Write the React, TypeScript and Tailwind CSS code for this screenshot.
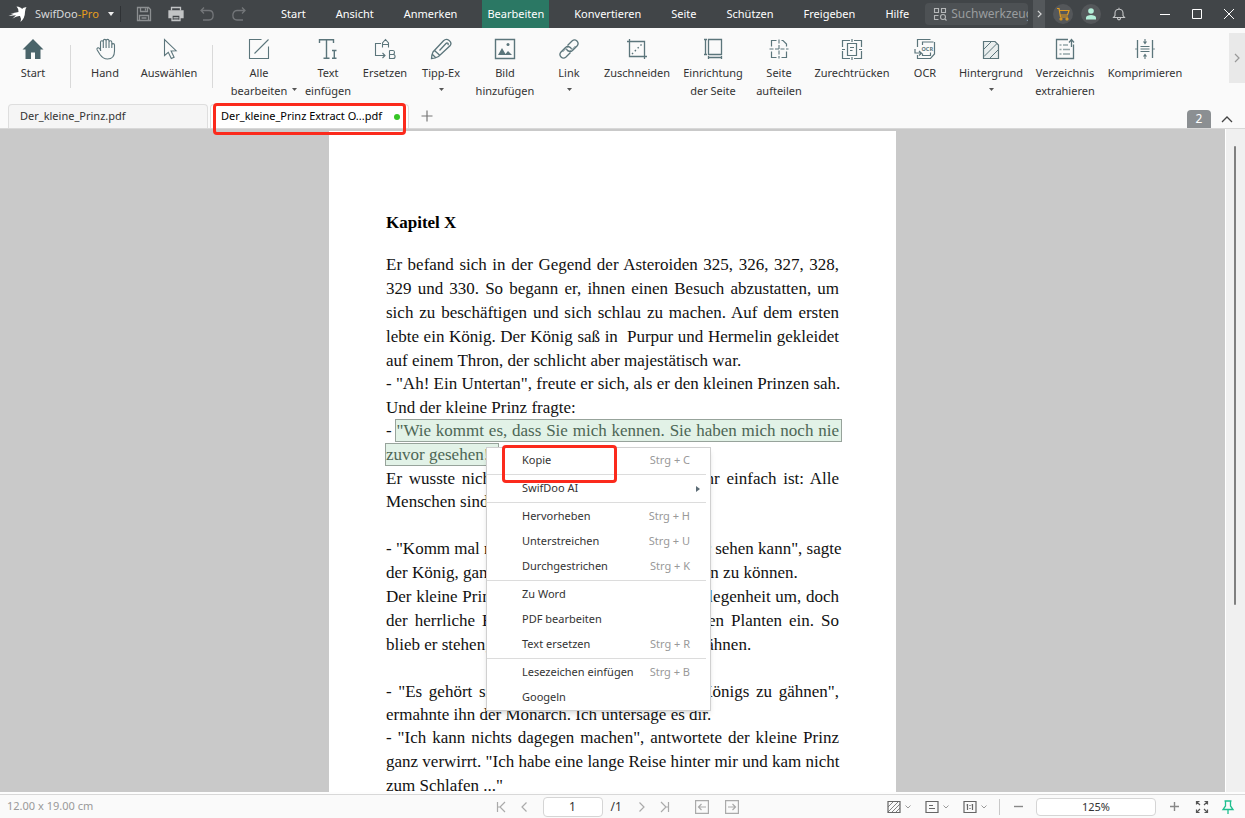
import type { ReactNode } from "react";

const menus = [
	"Start",
	"Ansicht",
	"Anmerken",
	"Bearbeiten",
	"Konvertieren",
	"Seite",
	"Schützen",
	"Freigeben",
	"Hilfe",
] as const;

type IconProps = { children: ReactNode };

function ToolIcon({ children }: IconProps) {
	return (
		<svg
			viewBox="0 0 22 22"
			className="h-[22px] w-[22px] shrink-0"
			fill="none"
			stroke="#5b757b"
			strokeWidth="1.1"
			aria-hidden="true"
		>
			{children}
		</svg>
	);
}

const icons = {
	home: (
		<ToolIcon>
			<path d="M11 1 0.5 11.5h3V21H9v-6.5h4V21h5.5v-9.5h3z" fill="#4a646a" stroke="none" />
		</ToolIcon>
	),
	hand: (
		<ToolIcon>
			<path d="M6.500 13V4.200c0-1.900 2.800-1.900 2.800 0V10M9.300 9V2.800c0-1.900 2.800-1.900 2.800 0V10M12.100 9V2.800c0-1.900 2.900-1.900 2.900 0V10M15 9V4.200c0-1.900 2.800-1.900 2.800 0V10M17.800 9V7c0-1.800 2.700-1.800 2.700 0v6c0 5-2.500 8-7 8-3.500 0-5.500-1.500-7.500-4.500L3.200 12c-1-1.700 1-3 2.300-1.500l1.500 2" />
		</ToolIcon>
	),
	select: (
		<ToolIcon>
			<path d="M6.500 1.500v16l3.800-3.200 3 6.200 2.800-1.300-3-6.200 5-.3z" />
		</ToolIcon>
	),
	editAll: (
		<ToolIcon>
			<path d="M13.500 1.500h-12v19h19v-12M6.500 15.500 20.500 1.500" />
		</ToolIcon>
	),
	addText: (
		<ToolIcon>
			<path d="M2.500 5V1.800h14V5M9.500 2v18M6.500 20.300h6M15 12.500h4.500M17.300 12.500v7.800M15 20.300h4.500" strokeWidth="1.400" />
		</ToolIcon>
	),
	replace: (
		<ToolIcon>
			<path d="M7 5.500H1.500v12H11M8.500 15l2.500 2.500L8.500 20M8.500 9.500V5l3-3.500 3 3.500v4.500M8.500 6.500h6M15.500 12.500v8h3.700c2.500 0 2.500-4 0-4h-3.700M19 16.500c2 0 2-4 0-4h-3.500" />
		</ToolIcon>
	),
	whiteout: (
		<ToolIcon>
			<path
				d="M1.500 20.500c0-2.500.5-4.500 1.500-6.500L13.500 2.800c3.500-3.500 9.500 1 6.500 5L8.500 18.500c-2 1.200-4.500 2-7 2zM4.500 12.500l5.500 5M2.500 16.500l3 3M9.500 12.500l6.500-7c1.300-1.300 3 .3 1.800 1.600"
				strokeWidth="1.300"
			/>
		</ToolIcon>
	),
	image: (
		<ToolIcon>
			<path d="M1.500 1.500h19v19h-19z" strokeWidth="1.400" />
			<path d="m4 17 4-7 3.500 6 2.500-3 4 4z" fill="#5b757b" stroke="none" />
			<circle cx="14" cy="6.500" r="1.500" fill="#5b757b" stroke="none" />
		</ToolIcon>
	),
	link: (
		<ToolIcon>
			<g strokeWidth="1.300">
				<path d="m9.500 7.500 4.500-4.500c3.500-3 8 1.500 5 5l-4.500 4.500c-2 1.800-5 1.200-6-1.500" />
				<path d="m12.500 14.500L8 19c-3.500 3-8-1.500-5-5l4.500-4.500c2-1.800 5-1.200 6 1.500" />
				<path d="M10.500 12.500c1 .8 1.800.6 2.500 0l4.500-4.500M11.500 9.500c-1-.8-1.800-.6-2.500 0L4.500 14" strokeWidth="0.900" />
			</g>
		</ToolIcon>
	),
	crop: (
		<ToolIcon>
			<path d="M1 3.500h17.500V21M3.500 1v17.500H21" strokeWidth="1.300" />
			<path d="m6 16 10-10" strokeDasharray="1.500 2.500" strokeWidth="1.400" />
		</ToolIcon>
	),
	pageSetup: (
		<ToolIcon>
			<path d="M6.500 1.500h13v15h-13zM3.500 1.500v15M2 1.500h3M2 16.500h3M6.500 19.500h13M6.500 18v3M19.500 18v3" strokeWidth="1.300" />
		</ToolIcon>
	),
	split: (
		<ToolIcon>
			<path d="M3.500 8.500v-6h5M13.500 2.500H15l3.500 3.500v2.500M3.500 13.500v6h5M13.500 19.500h5v-6" strokeWidth="1.200" />
			<path d="M1.500 11h19M11 1.500v19" strokeDasharray="4 1.500" strokeWidth="1.100" />
		</ToolIcon>
	),
	deskew: (
		<ToolIcon>
			<path
				d="M9 2.500H1.500V9M13 2.500h7.500V9M1.500 13v7.500H9M20.500 13v7.500H13M11 1v3M11 19v3M1 11.500h3M18 11.500h3M6.500 5.500h9v12h-9zM9 9.500h4M9 12.500h2.500"
				strokeWidth="1.200"
			/>
		</ToolIcon>
	),
	ocr: (
		<ToolIcon>
			<path
				d="M3.500 9V1.500h13M19.500 4H8.500v3M20.500 4v12l-4 4.500h-13V17M8.500 15.500v2h8v-3M1 11v4h6M5 13l2.500 2.200L5 17.500"
				strokeWidth="1.200"
			/>
			<text x="7.500" y="13" fontSize="5.500" fontWeight="700" fill="#5b757b" stroke="none" fontFamily="Noto Sans, sans-serif">
				OCR
			</text>
		</ToolIcon>
	),
	background: (
		<ToolIcon>
			<path d="M3.500 3.500H15l3.500 3.500v13.500h-15z" fill="#e9eeee" strokeWidth="1.200" />
			<path d="m4 11 7-7M4 18.500 16.500 6M10 20l8-8" strokeWidth="1" />
		</ToolIcon>
	),
	extract: (
		<ToolIcon>
			<path d="M14 1.500H2.500v19h17v-14M17.500 9V2M15 4.500l2.500-3L20 4.500" strokeWidth="1.300" />
			<path d="M5.500 7h2M9 7h5M5.500 11.500h2M9 11.500h7M5.500 16h2M9 16h7" stroke="#93a5a8" strokeWidth="1.500" />
		</ToolIcon>
	),
	compress: (
		<ToolIcon>
			<path d="M3.500 2v18M18.500 2v18M1.500 11h1M19.500 11h1" strokeWidth="1.300" />
			<path d="M6.500 8.500h9M6.500 11h9M6.500 13.500h9M11 1v4M11 17v4M9.500 3.500 11 5.500l1.500-2M9.500 18.500 11 16.500l1.500 2" />
		</ToolIcon>
	),
};

type Tool = {
	icon: keyof typeof icons;
	label: string;
	second?: string;
	caret?: boolean;
	width: string;
	divider?: string;
};

const tools: Tool[] = [
	{ icon: "home", label: "Start", width: "w-[66px]", divider: "w-2" },
	{ icon: "hand", label: "Hand", width: "w-[62px]" },
	{ icon: "select", label: "Auswählen", width: "w-[66px]", divider: "w-5" },
	{ icon: "editAll", label: "Alle", second: "bearbeiten", caret: true, width: "w-[74px]" },
	{ icon: "addText", label: "Text", second: "einfügen", width: "w-[64px]" },
	{ icon: "replace", label: "Ersetzen", width: "w-[50px]" },
	{ icon: "whiteout", label: "Tipp-Ex", caret: true, width: "w-[62px]" },
	{ icon: "image", label: "Bild", second: "hinzufügen", width: "w-[66px]" },
	{ icon: "link", label: "Link", caret: true, width: "w-[62px]" },
	{ icon: "crop", label: "Zuschneiden", width: "w-[74px]" },
	{ icon: "pageSetup", label: "Einrichtung", second: "der Seite", width: "w-[78px]" },
	{ icon: "split", label: "Seite", second: "aufteilen", width: "w-[54px]" },
	{ icon: "deskew", label: "Zurechtrücken", width: "w-[92px]" },
	{ icon: "ocr", label: "OCR", width: "w-[54px]" },
	{ icon: "background", label: "Hintergrund", caret: true, width: "w-[78px]" },
	{ icon: "extract", label: "Verzeichnis", second: "extrahieren", width: "w-[70px]" },
	{ icon: "compress", label: "Komprimieren", width: "w-[90px]" },
];

type MenuItem = { label: string; keys?: string; sub?: boolean };

const contextGroups: MenuItem[][] = [
	[{ label: "Kopie", keys: "Strg + C" }],
	[{ label: "SwifDoo AI", sub: true }],
	[
		{ label: "Hervorheben", keys: "Strg + H" },
		{ label: "Unterstreichen", keys: "Strg + U" },
		{ label: "Durchgestrichen", keys: "Strg + K" },
	],
	[{ label: "Zu Word" }, { label: "PDF bearbeiten" }, { label: "Text ersetzen", keys: "Strg + R" }],
	[{ label: "Lesezeichen einfügen", keys: "Strg + B" }, { label: "Googeln" }],
];

function TitleBar() {
	return (
		<header className="flex h-7 shrink-0 items-center bg-[#414548] text-white">
			<svg viewBox="0 0 20 18" className="ml-2 h-[18px] w-5 shrink-0" fill="#fff" aria-hidden="true">
				<path d="M8.500 1.500Q13 2 14 4q1.500-2 4.500-1.700Q17 4 17 7q0 6-4.500 10 1-4-.5-6-3-.5-7.500 2.500L8 10.200.5 11 6 8.800 2.500 8.500Q7 7.500 10.500 7 11 4 8.500 1.500z" />
			</svg>
			<button
				type="button"
				className="ml-[7px] flex w-[86px] shrink-0 items-center justify-between border-r border-[#2f3235] pr-1.5"
			>
				<span className="text-[#d9dadb]">
					SwifDoo<span className="text-[#e79f1c]">-Pro</span>
				</span>
				<svg viewBox="0 0 6 4" className="h-1 w-1.5" fill="#eee" aria-hidden="true">
					<path d="M0 0h6L3 4z" />
				</svg>
			</button>
			<div className="ml-[15px] flex w-[111px] shrink-0 items-center justify-between">
				<button type="button" aria-label="Speichern">
					<svg viewBox="0 0 16 16" className="size-4" fill="none" stroke="#8c8f91" strokeWidth="1.300">
						<path d="M1.500 1.500h11l2 2v11h-13zM4.500 1.500v4h7v-4M9.500 2.500v2M3.500 14.500v-5h9v5M5.500 12h5" />
					</svg>
				</button>
				<button type="button" aria-label="Drucken">
					<svg viewBox="0 0 16 16" className="size-4" fill="none" stroke="#c2c4c5" strokeWidth="1.300">
						<path d="M3.500 4.500v-3h9v3" />
						<path d="M1 5h14v6.500H1z" fill="#c2c4c5" />
						<path d="M4 9h8v5.500H4z" fill="#414548" />
						<path d="M5.500 11.500h5M5.500 13h5" strokeWidth="0.800" />
					</svg>
				</button>
				<button type="button" aria-label="Rückgängig">
					<svg viewBox="0 0 16 16" className="size-4" fill="none" stroke="#737679" strokeWidth="1.300">
						<path d="M5 1.500 2 4.500l3 3M2 4.500h8c5.500 0 5.500 9.500 0 9.500H4" />
					</svg>
				</button>
				<button type="button" aria-label="Wiederholen">
					<svg viewBox="0 0 16 16" className="size-4" fill="none" stroke="#737679" strokeWidth="1.300">
						<path d="m11 1.500 3 3-3 3M14 4.500H6c-5.500 0-5.500 9.500 0 9.500h6" />
					</svg>
				</button>
			</div>
			<nav className="ml-[19px] flex h-full shrink-0">
				{menus.map((menu) => (
					<button
						key={menu}
						type="button"
						className={
							menu === "Bearbeiten"
								? "mx-2.5 h-full bg-[#2b7864] px-[5px]"
								: "mx-2.5 h-full px-[5px]"
						}
					>
						{menu}
					</button>
				))}
			</nav>
			<label className="ml-px flex h-[22px] min-w-0 flex-1 items-center gap-1 rounded-sm bg-[#4d5154] pl-2">
				<svg
					viewBox="0 0 14 14"
					className="size-3.5 shrink-0"
					fill="none"
					stroke="#b5b7b8"
					strokeWidth="1.100"
					aria-hidden="true"
				>
					<path d="M1.500 1.500h4v4h-4zM8.500 1.500h4v4h-4zM5.500 8.500h-4v4h4" />
					<circle cx="10" cy="10" r="2.500" />
					<path d="m12 12 1.500 1.500" />
				</svg>
				<input
					type="text"
					aria-label="Werkzeugsuche"
					placeholder="Suchwerkzeuge"
					className="w-full min-w-0 bg-transparent text-xs outline-none placeholder:text-[#9a9d9f]"
				/>
			</label>
			<button
				type="button"
				aria-label="Weitere Menüs"
				className="ml-[5px] flex h-full w-3 shrink-0 items-center justify-center bg-[#54585b]"
			>
				<svg viewBox="0 0 6 10" className="h-2 w-[5px]" fill="none" stroke="#d5d6d7" strokeWidth="1.500">
					<path d="m1 1 4 4-4 4" />
				</svg>
			</button>
			<div className="ml-2 flex shrink-0 items-center gap-2">
				<button
					type="button"
					aria-label="Warenkorb"
					className="flex size-5 items-center justify-center rounded-full bg-[#54575a]"
				>
					<svg viewBox="0 0 14 14" className="size-3.5" fill="none" stroke="#e09c20" strokeWidth="1.200">
						<path d="M1 1.500h2l1.500 8.500H12M3.500 3.500h9.500l-1.500 4.500H4.200" />
						<circle cx="5" cy="12" r="1" />
						<circle cx="11" cy="12" r="1" />
					</svg>
				</button>
				<button
					type="button"
					aria-label="Konto"
					className="flex size-5 items-center justify-center rounded-full bg-[#54575a]"
				>
					<svg viewBox="0 0 12 12" className="size-3" fill="#b4efd9">
						<circle cx="6" cy="3" r="2.800" />
						<path d="M1 11.500V9.500c0-3.500 10-3.500 10 0v2z" />
					</svg>
				</button>
				<button type="button" aria-label="Mitteilungen" className="flex size-5 items-center justify-center">
					<svg viewBox="0 0 14 14" className="size-3.5" fill="none" stroke="#c5c7c8" strokeWidth="1.100">
						<path d="M1.500 10.500h11L11 8.500V6c0-5-8-5-8 0v2.500zM5.500 11c0 2.500 3 2.500 3 0M7 2V.8" />
					</svg>
				</button>
			</div>
			<div className="ml-5 flex shrink-0">
				<button type="button" aria-label="Minimieren" className="flex h-7 w-8 items-center justify-center">
					<svg viewBox="0 0 12 12" className="size-3" fill="none" stroke="#fff">
						<path d="M1 6.500h10" />
					</svg>
				</button>
				<button type="button" aria-label="Maximieren" className="flex h-7 w-8 items-center justify-center">
					<svg viewBox="0 0 12 12" className="size-3" fill="none" stroke="#fff">
						<path d="M1.500 1.500h9v9h-9z" />
					</svg>
				</button>
				<button type="button" aria-label="Schließen" className="flex h-7 w-8 items-center justify-center">
					<svg viewBox="0 0 12 12" className="size-3" fill="none" stroke="#fff">
						<path d="m1 1 10 10M11 1 1 11" />
					</svg>
				</button>
			</div>
		</header>
	);
}

function Caret({ className }: { className?: string }) {
	return (
		<svg viewBox="0 0 5 3" className={`h-[3px] w-[5px] shrink-0 ${className ?? ""}`} fill="#555" aria-hidden="true">
			<path d="M0 0h5L2.500 3z" />
		</svg>
	);
}

function Ribbon() {
	return (
		<div className="flex h-[76px] shrink-0 items-start">
			{tools.map(({ icon, label, second, caret, width, divider }) => (
				<div key={icon} className="flex shrink-0 items-start">
					<button
						type="button"
						className={`${width} flex flex-col items-center pt-2.5 leading-[18px] whitespace-nowrap text-[#333]`}
					>
						{icons[icon]}
						<span className="mt-1">{label}</span>
						{second && (
							<span className="relative">
								{second}
								{caret && <Caret className="absolute top-1.5 -right-2.5" />}
							</span>
						)}
						{caret && !second && <Caret className="mt-1.5" />}
					</button>
					{divider && (
						<div className={`${divider} mt-[17px] flex h-[43px] justify-center`}>
							<div className="w-px bg-[#d9d9d9]" />
						</div>
					)}
				</div>
			))}
			<button
				type="button"
				aria-label="Weitere Werkzeuge"
				className="mt-[5px] ml-auto flex h-[50px] w-4 items-center justify-center bg-[#e9e9e9]"
			>
				<svg viewBox="0 0 6 10" className="h-2.5 w-1.5" fill="none" stroke="#999" strokeWidth="1.200">
					<path d="m1 1 4 4-4 4" />
				</svg>
			</button>
		</div>
	);
}

function FileTabs() {
	return (
		<div className="flex h-[25px] shrink-0 items-end gap-0.5 border-b border-[#d8d8d8] pl-2">
			<button
				type="button"
				className="h-6 w-[200px] rounded-t border border-b-0 border-[#dedede] bg-[#f5f5f5] pl-[11px] text-left text-[#333]"
			>
				Der_kleine_Prinz.pdf
			</button>
			<div className="relative h-6 w-[199px]">
				<button
					type="button"
					className="flex h-full w-full items-center rounded-t border border-b-0 border-[#dedede] bg-white pr-2 pl-2.5 whitespace-nowrap text-black"
				>
					Der_kleine_Prinz Extract O...pdf
					<span className="ml-auto size-1.5 rounded-full bg-[#36c626]" />
				</button>
				<div className="absolute top-[-1px] left-[3px] z-10 h-8 w-[193px] rounded-sm border-[3px] border-[#fb2a1c]" />
			</div>
			<button type="button" aria-label="Neuer Tab" className="ml-2.5 flex h-6 w-3 items-center justify-center">
				<svg viewBox="0 0 12 12" className="size-3" fill="none" stroke="#777" strokeWidth="1.200">
					<path d="M6 .5v11M.5 6h11" />
				</svg>
			</button>
			<span className="ml-auto flex h-[18px] w-6 items-center justify-center rounded-t-sm bg-[#8b8f92] text-xs text-white">
				2
			</span>
			<button type="button" aria-label="Menüband einklappen" className="mr-3 ml-2 flex h-[18px] items-center">
				<svg viewBox="0 0 12 8" className="h-2 w-3" fill="none" stroke="#444" strokeWidth="1.300">
					<path d="m1 7 5-5 5 5" />
				</svg>
			</button>
		</div>
	);
}

// A full line reaches both margins, the last line of a paragraph does not.
function Line({ children, last }: { children: ReactNode; last?: boolean }) {
	return (
		<span className={last ? "block whitespace-pre" : "block text-justify whitespace-nowrap [text-align-last:justify]"}>
			{children}
		</span>
	);
}

function Mark({ children }: { children: ReactNode }) {
	return (
		<mark className="-mr-0.5 bg-[#e2f2e7] py-px pr-0.5 text-[#4d6655] outline outline-[#97a39b]">{children}</mark>
	);
}

function ContextMenu() {
	return (
		<div className="absolute top-[316px] left-[157px] w-[225px] border border-[#d0d0d0] bg-white font-['Noto_Sans',sans-serif] text-[11px] text-[#333] shadow-md">
			{contextGroups.map((group, i) => (
				<ul key={group[0].label} className={i > 0 ? "mt-px mr-1 border-t border-[#dcdcdc] pt-px" : ""}>
					{group.map(({ label, keys, sub }) => (
						<li key={label}>
							<button
								type="button"
								className={`flex h-[25px] w-full items-center justify-between pl-[35px] ${i > 0 ? "pr-4" : "pr-5"}`}
							>
								<span>{label}</span>
								{keys && <span className="text-[#999]">{keys}</span>}
								{sub && (
									<svg viewBox="0 0 4 6" className="-mr-2.5 h-1.5 w-1" fill="#5b6b75" aria-hidden="true">
										<path d="M0 0v6l4-3z" />
									</svg>
								)}
							</button>
						</li>
					))}
				</ul>
			))}
			<div className="absolute top-[-3px] left-[15px] h-[38px] w-[115px] rounded-sm border-[3px] border-[#fb2a1c]" />
		</div>
	);
}

function Viewer() {
	return (
		<main className="flex min-h-0 flex-1 overflow-hidden border-b-2 border-[#fdfdfd] bg-[#c9c9c9]">
			<div className="flex min-w-0 flex-1 justify-center pt-0.5">
				<article className="relative w-[567px] bg-white px-[57px] pt-20 font-['Liberation_Serif',serif] text-[17px] text-[#111]">
					<h1 className="mb-[18px] leading-6 font-bold text-black">Kapitel X</h1>
					<p className="leading-6">
						<Line>Er befand sich in der Gegend der Asteroiden 325, 326, 327, 328,</Line>
						<Line>329 und 330. So begann er, ihnen einen Besuch abzustatten, um</Line>
						<Line>sich zu beschäftigen und sich schlau zu machen. Auf dem ersten</Line>
						<Line>lebte ein König. Der König saß in &nbsp;Purpur und Hermelin gekleidet</Line>
					</p>
					<p className="leading-[23px]">
						<Line last>auf einem Thron, der schlicht aber majestätisch war.</Line>
					</p>
					<p className="leading-6">
						<Line last>- "Ah! Ein Untertan", freute er sich, als er den kleinen Prinzen sah.</Line>
					</p>
					<p className="leading-[23px]">
						<Line last>Und der kleine Prinz fragte:</Line>
					</p>
					<p className="leading-6">
						<Line>
							- <Mark>"Wie kommt es, dass Sie mich kennen. Sie haben mich noch nie</Mark>
						</Line>
						<Line last>
							<Mark>zuvor gesehen!"</Mark>
						</Line>
					</p>
					<p className="mb-6 leading-[23px]">
						<Line>Er wusste nicht, dass die Welt für Könige sehr einfach ist: Alle</Line>
						<Line last>Menschen sind Untertanen.</Line>
					</p>
					<p className="leading-6">
						<Line>- "Komm mal näher, damit ich dich noch besser sehen kann", sagte</Line>
						<Line last>der König, ganz stolz, endlich einmal König sein zu können.</Line>
					</p>
					<p className="mb-[23px] leading-6">
						<Line>Der kleine Prinz schaute sich nach einer Sitzgelegenheit um, doch</Line>
						<Line>der herrliche Hermelinmantel nahm den ganzen Planten ein. So</Line>
						<Line last>blieb er stehen, da er müde war, begann er zu gähnen.</Line>
					</p>
					<p className="leading-[23px]">
						<Line>- "Es gehört sich nicht, in Gegenwart eines Königs zu gähnen",</Line>
						<Line last>ermahnte ihn der Monarch. Ich untersage es dir.</Line>
					</p>
					<p className="leading-6">
						<Line>- "Ich kann nichts dagegen machen", antwortete der kleine Prinz</Line>
						<Line>ganz verwirrt. "Ich habe eine lange Reise hinter mir und kam nicht</Line>
						<Line last>zum Schlafen ..."</Line>
					</p>
					<ContextMenu />
				</article>
			</div>
			<div className="flex w-5 shrink-0 border-l border-white bg-[#f0f0f0] pt-[17px] pl-2">
				<div className="h-[71%] w-0.5 rounded bg-[#808080]" />
			</div>
		</main>
	);
}

type StatusButtonProps = { label: string; children: ReactNode; wide?: boolean };

function StatusButton({ label, children, wide }: StatusButtonProps) {
	return (
		<button type="button" aria-label={label} className="flex items-center gap-1">
			<svg viewBox="0 0 14 14" className="size-3.5" fill="none" stroke={wide ? "#666" : "#aaa"} strokeWidth="1.200">
				{children}
			</svg>
			{wide && (
				<svg viewBox="0 0 6 4" className="h-1 w-1.5" fill="none" stroke="#999" aria-hidden="true">
					<path d="m.5.5 2.500 2.500L5.500.5" />
				</svg>
			)}
		</button>
	);
}

function StatusBar() {
	return (
		<footer className="grid h-6 shrink-0 grid-cols-[1fr_auto_1fr] items-center border-t border-[#d8d8d8] text-[#333]">
			<span className="pl-[7px] text-[#999]">12.00 x 19.00 cm</span>
			<div className="flex items-center pr-3">
				<StatusButton label="Erste Seite">
					<path d="M2.500 2v10M10 2 5 7l5 5M2.500 7H5" />
				</StatusButton>
				<div className="ml-2 flex">
					<StatusButton label="Vorherige Seite">
						<path d="M9.500 2.500 5 7l4.500 4.500" />
					</StatusButton>
				</div>
				<input
					type="text"
					aria-label="Seite"
					defaultValue="1"
					className="ml-3 h-5 w-[60px] rounded border border-[#d5d5d5] bg-white text-center text-xs"
				/>
				<span className="ml-2 w-4 text-xs">/1</span>
				<div className="ml-2 flex gap-2">
					<StatusButton label="Nächste Seite">
						<path d="M4.500 2.500 9 7l-4.500 4.500" />
					</StatusButton>
					<StatusButton label="Letzte Seite">
						<path d="M11.500 2v10M4 2l5 5-5 5M11.500 7H9" />
					</StatusButton>
				</div>
				<div className="ml-6 flex gap-4">
					<StatusButton label="Vorherige Ansicht">
						<path d="M.6.6h12.800v12.800H.6zM6.500 4 3.500 7l3 3M3.500 7h7.500" />
					</StatusButton>
					<StatusButton label="Nächste Ansicht">
						<path d="M.6.6h12.800v12.800H.6zM7.500 4l3 3-3 3M10.500 7H3" />
					</StatusButton>
				</div>
			</div>
			<div className="flex items-center justify-end pr-2.5">
				<div className="flex gap-3.5">
					<StatusButton label="Hintergrund" wide>
						<path d="M1 1.500h12v11H1z" />
						<path d="m1 7 5-5M1 12 11 2M5 12l8-8M9 12l4-4" strokeWidth="0.800" />
					</StatusButton>
					<StatusButton label="Seitenansicht" wide>
						<path d="M1 1.500h12v11H1zM4 5.500h4M4 8.500h6" />
					</StatusButton>
					<StatusButton label="Originalgröße" wide>
						<path d="M1 1.500h12v11H1zM4.500 4v6M9.500 4v6M3.500 5h1M8.500 5h1M7 5v1M7 8v1" />
					</StatusButton>
				</div>
				<div className="ml-3 h-4 w-px bg-[#c8c8c8]" />
				<button type="button" aria-label="Verkleinern" className="ml-3.5">
					<svg viewBox="0 0 9 9" className="size-[9px]" stroke="#888" strokeWidth="1.400">
						<path d="M0 4.500h9" />
					</svg>
				</button>
				<input
					type="text"
					aria-label="Zoom"
					defaultValue="125%"
					className="ml-[13px] h-[18px] w-[120px] rounded border border-[#d5d5d5] bg-white text-center"
				/>
				<button type="button" aria-label="Vergrößern" className="ml-3.5">
					<svg viewBox="0 0 9 9" className="size-[9px]" stroke="#888" strokeWidth="1.400">
						<path d="M0 4.500h9M4.500 0v9" />
					</svg>
				</button>
				<button type="button" aria-label="Vollbild" className="ml-4">
					<svg viewBox="0 0 14 14" className="size-3.5" fill="none" stroke="#555" strokeWidth="1.200">
						<path d="M1.500 4.500v-3h3M1.500 1.500l3.500 3.500M9.500 1.500h3v3M12.500 1.500 9 5M1.500 9.500v3h3M1.500 12.500 5 9M12.500 9.500v3h-3M12.500 12.500 9 9" />
					</svg>
				</button>
				<button type="button" aria-label="Anheften" className="ml-3">
					<svg viewBox="0 0 14 14" className="size-3.5" fill="none" stroke="#1fbf8f" strokeWidth="1.300">
						<path d="M3.500 1h7M4.500 1v5L2 9.500h10L9.500 6V1M7 9.500V14" />
					</svg>
				</button>
			</div>
		</footer>
	);
}

export default function App() {
	return (
		<div className="flex h-screen flex-col overflow-hidden bg-[#fafafa] font-['Noto_Sans',sans-serif] text-[11px]">
			<TitleBar />
			<Ribbon />
			<FileTabs />
			<Viewer />
			<StatusBar />
		</div>
	);
}
